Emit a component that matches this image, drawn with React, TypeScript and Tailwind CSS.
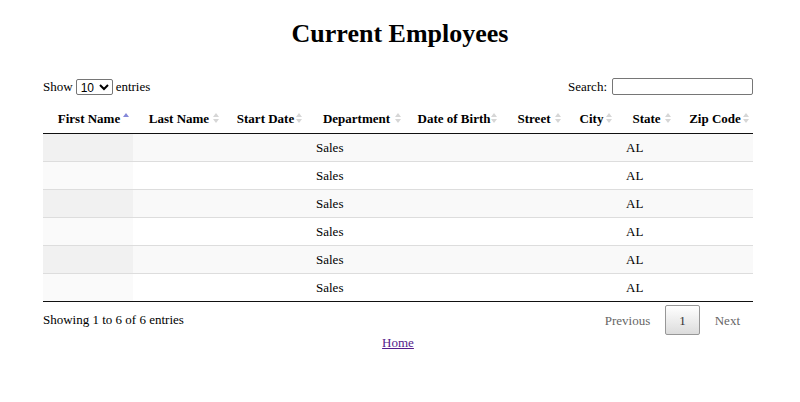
import type { ReactNode } from 'react'

const COLUMNS = [
  { key: 'firstName', label: 'First Name', width: 90 },
  { key: 'lastName', label: 'Last Name', width: 90 },
  { key: 'startDate', label: 'Start Date', width: 83 },
  { key: 'department', label: 'Department', width: 99 },
  { key: 'dateOfBirth', label: 'Date of Birth', width: 96 },
  { key: 'street', label: 'Street', width: 64 },
  { key: 'city', label: 'City', width: 51 },
  { key: 'state', label: 'State', width: 59 },
  { key: 'zipCode', label: 'Zip Code', width: 78 },
]

const EMPLOYEES = Array.from({ length: 6 }, () => ({
  firstName: '',
  lastName: '',
  startDate: '',
  department: 'Sales',
  dateOfBirth: '',
  street: '',
  city: '',
  state: 'AL',
  zipCode: '',
}))

/** 並び替えアイコン */
function SortIcon({ active }: { active: boolean }) {
  return (
    <svg width="6" height="11" viewBox="0 0 6 11" className="absolute right-[4px] top-1/2 -translate-y-1/2">
      <polygon points="0,4.5 3,0.5 6,4.5" fill={active ? '#8488d9' : '#d6d6d6'} />
      {!active && <polygon points="0,6.5 3,10.5 6,6.5" fill="#d6d6d6" />}
    </svg>
  )
}

function PageButton({ children, current }: { children: ReactNode; current?: boolean }) {
  if (current) {
    return (
      <span className="ml-[2px] px-[13px] py-[6.5px] leading-[15px] border border-[#979797] rounded-[2px] text-[#333] bg-gradient-to-b from-white to-[#dcdcdc]">
        {children}
      </span>
    )
  }
  return <span className="ml-[2px] px-[13px] py-[7.5px] leading-[15px] text-[#666]">{children}</span>
}

export default function App() {
  return (
    <div className="min-h-[402px] bg-white text-black text-[13px] font-['Liberation_Serif',serif]">
      <h1 className="pt-[19px] text-center text-[26px] leading-[30px] font-bold">Current Employees</h1>

      <div className="ml-[43px] w-[710px]">
        {/* 表示件数・検索 */}
        <div className="mt-[29px] flex items-center justify-between h-[17px]">
          <label className="flex items-center gap-[3px]">
            Show
            <select
              defaultValue="10"
              className="h-[16px] w-[37px] text-[12px] leading-[14px] font-['Liberation_Sans',sans-serif] border border-[#767676] rounded-[2px] bg-white"
            >
              <option value="10">10</option>
              <option value="25">25</option>
              <option value="50">50</option>
              <option value="100">100</option>
            </select>
            entries
          </label>
          <label className="flex items-center gap-[5px]">
            Search:
            <input type="search" className="h-[17px] w-[141px] border border-[#767676] rounded-[2px]" />
          </label>
        </div>

        {/* 従業員テーブル */}
        <table className="mt-[8px] w-full table-fixed border-separate border-spacing-0">
          <colgroup>
            {COLUMNS.map((col) => (
              <col key={col.key} style={{ width: col.width }} />
            ))}
          </colgroup>
          <thead>
            <tr>
              {COLUMNS.map((col, i) => (
                <th
                  key={col.key}
                  className="relative h-[31px] pl-[7px] pr-[5px] text-center font-bold leading-[15px] whitespace-nowrap border-b border-[#111]"
                >
                  {col.label}
                  <SortIcon active={i === 0} />
                </th>
              ))}
            </tr>
          </thead>
          <tbody>
            {EMPLOYEES.map((emp, r) => (
              <tr key={r} className={r % 2 === 0 ? 'bg-[#f9f9f9]' : 'bg-white'}>
                {COLUMNS.map((col, i) => (
                  <td
                    key={col.key}
                    className={`h-[28px] px-[10px] py-0 text-left leading-[15px] border-b ${
                      r === EMPLOYEES.length - 1 ? 'border-[#111]' : 'border-[#ddd]'
                    } ${i === 0 ? (r % 2 === 0 ? 'bg-[#f1f1f1]' : 'bg-[#fafafa]') : ''}`}
                  >
                    {emp[col.key as keyof typeof emp]}
                  </td>
                ))}
              </tr>
            ))}
          </tbody>
        </table>

        {/* 件数表示・ページ送り */}
        <div className="mt-[3px] flex items-center justify-between h-[30px]">
          <div>Showing 1 to 6 of 6 entries</div>
          <div className="flex items-center">
            <PageButton>Previous</PageButton>
            <PageButton current>1</PageButton>
            <PageButton>Next</PageButton>
          </div>
        </div>

        <div className="text-center leading-[15px]">
          <a href="#" className="text-[#551a8b] underline">
            Home
          </a>
        </div>
      </div>
    </div>
  )
}
